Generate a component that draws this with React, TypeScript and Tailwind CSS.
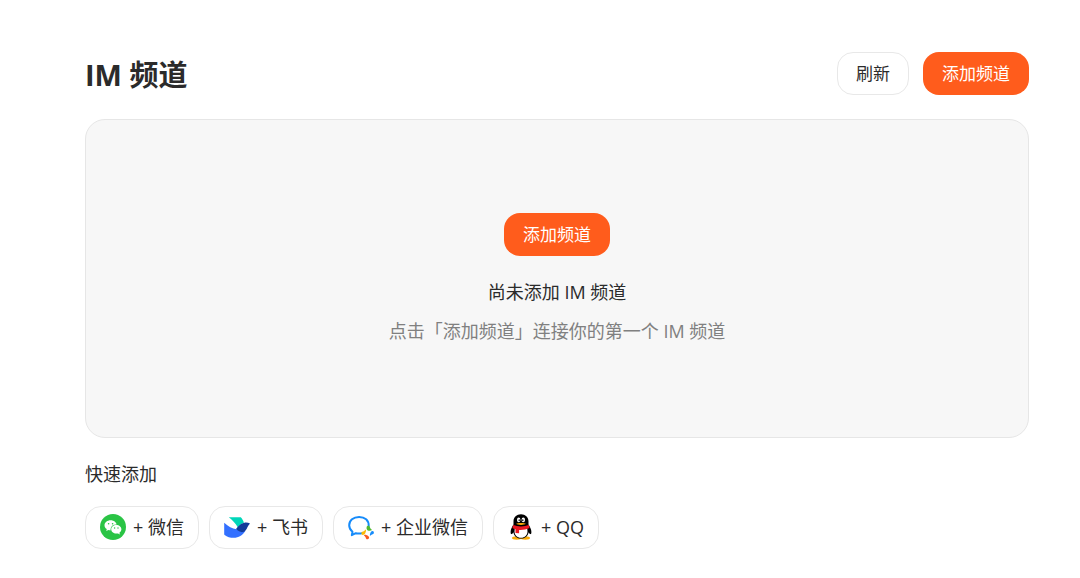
import type { ReactNode } from 'react'

function WeChatIcon() {
  return (
    <svg viewBox="0 0 26 26" className="size-[26px] shrink-0" aria-hidden="true">
      <circle cx="13" cy="13" r="13" fill="#2ac445" />
      <path
        d="M10.600 6.200c-3.400 0-6.100 2.200-6.100 5 0 1.600.9 3 2.300 3.900l-.6 1.900 2.200-1.100c.7.2 1.400.3 2.200.3 3.400 0 6.100-2.200 6.100-5s-2.700-5-6.100-5z"
        fill="#fff"
      />
      <ellipse cx="16.300" cy="15.300" rx="5.700" ry="4.900" fill="#2ac445" />
      <path
        d="M16.300 11c-2.900 0-5.100 1.900-5.100 4.300s2.200 4.300 5.100 4.300c.6 0 1.200-.1 1.700-.2l1.900 1-.5-1.700c1.200-.8 2-2 2-3.400 0-2.400-2.200-4.300-5.100-4.300z"
        fill="#fff"
      />
      <circle cx="8.600" cy="9.700" r=".8" fill="#2ac445" />
      <circle cx="12.600" cy="9.700" r=".8" fill="#2ac445" />
      <circle cx="14.600" cy="14" r=".7" fill="#2ac445" />
      <circle cx="18" cy="14" r=".7" fill="#2ac445" />
    </svg>
  )
}

function FeishuIcon() {
  return (
    <svg viewBox="0 0 26 26" className="size-[26px] shrink-0" aria-hidden="true">
      <path d="M4.800 3.200h12c1.600 1.700 2.600 3.600 3.100 5.600-2.400.8-4.200 2.400-6 4.800C11.500 9.300 8.600 6 4.800 3.200z" fill="#00d6b9" />
      <path d="M.2 8.800c4.200 3.600 7.900 5.900 12.400 6.500 3 1.500 5.600 2 8.900 1.400-2.700 4.500-7 7.100-11.700 7.100-3.600 0-6.700-1-9.200-2.900-.4-.3-.4-.6-.4-1z" fill="#3370ff" />
      <path d="M12 15.100c2.800-3.400 5.500-6.200 9.300-6.500 1.700-.1 3.300.2 4.700.8-2.300 2-2.700 5-4.500 7.200-2.600 2.700-6.200 1.700-9.500-1.500z" fill="#133c9a" />
    </svg>
  )
}

function WeComIcon() {
  return (
    <svg viewBox="0 0 26 26" className="size-[26px] shrink-0" aria-hidden="true">
      <path
        d="M20.700 12C20.900 6.300 16.800 3 11.100 3 5.300 3 1.200 6.500 1.200 11.300c0 2.900 1.300 4.900 3.300 6.400l-.7 3.500 4-2c2 .6 4.400.5 6.600-.1"
        fill="none"
        stroke="#168bfa"
        strokeWidth="2"
        strokeLinecap="round"
        strokeLinejoin="round"
      />
      <path d="M19.400 16.200c-1-.8-1-2.500-.6-3.600a1.600 1.600 0 0 1 2.900-.1c.3 1.500 1.100 2.500 2.400 3.600-1.500.9-3.100 1-4.700.1z" fill="#50b832" />
      <path d="M22 20.200c.3-1.900 1.200-3.100 2.500-3.200a1.600 1.600 0 0 1 .7 2.900c-1.300.3-2.300 1-3 1.900-.4-.5-.4-1-.2-1.600z" fill="#168bfa" />
      <path d="M18.300 20.900c1.800.5 3 1.500 2.800 3.100a1.700 1.700 0 0 1-3.100.4c-.3-1.400-1-2.400-2.200-3.200.8-.5 1.600-.6 2.500-.3z" fill="#fa5a1e" />
      <path d="M17.600 18.200c-.5 1.800-1.500 2.700-3 2.700a1.700 1.700 0 0 1-.4-3.100c1.500-.4 2.500-1.200 3.400-2.300.6.8.5 1.700 0 2.700z" fill="#fbbc05" />
    </svg>
  )
}

function QQIcon() {
  return (
    <svg viewBox="0 0 26 26" className="size-[26px] shrink-0" aria-hidden="true">
      <ellipse cx="8.700" cy="24" rx="4.700" ry="1.700" fill="#faab07" />
      <ellipse cx="17.300" cy="24" rx="4.700" ry="1.700" fill="#faab07" />
      <path
        d="M13 .3C8.700.3 5.500 3.200 5.500 7.400v3.200C4 13 2.600 15.600 2.600 18c0 1.700.5 2.300 1 2.100.6-.2 1.300-1 1.800-1.900.7 4 3.700 6.300 7.600 6.300s6.900-2.300 7.600-6.300c.5.9 1.200 1.700 1.800 1.900.5.2 1-.4 1-2.100 0-2.400-1.400-5-2.900-7.400V7.400C20.500 3.200 17.300.3 13 .3z"
        fill="#000"
      />
      <path d="M7.200 13h11.600c.5 1.500.7 2.900.7 4.400 0 3.700-2.700 6.300-6.500 6.300s-6.500-2.600-6.500-6.300c0-1.500.2-2.900.7-4.400z" fill="#fff" />
      <ellipse cx="10.700" cy="5.900" rx="1.700" ry="2.300" fill="#fff" />
      <ellipse cx="15.300" cy="5.900" rx="1.700" ry="2.300" fill="#fff" />
      <ellipse cx="11.200" cy="6.200" rx=".7" ry="1" fill="#000" />
      <ellipse cx="14.800" cy="6.200" rx=".7" ry="1" fill="#000" />
      <path d="M8.200 9.800c1.200-1.200 8.400-1.200 9.600 0-1.200 1.500-8.400 1.500-9.600 0z" fill="#faab07" />
      <path d="M5.200 11.100c4.800 1.700 10.800 1.700 15.600 0l.8 3c-3.100 1.400-7 2-10.500 1.800v3.300l-3.600-.3v-3.600c-1.100-.3-2.200-.7-3.100-1.200z" fill="#eb1923" />
    </svg>
  )
}

const quickChannels: { name: string; icon: ReactNode }[] = [
  { name: '微信', icon: <WeChatIcon /> },
  { name: '飞书', icon: <FeishuIcon /> },
  { name: '企业微信', icon: <WeComIcon /> },
  { name: 'QQ', icon: <QQIcon /> },
]

function AddChannelButton() {
  return (
    <button
      type="button"
      className="h-[43px] rounded-2xl bg-[#ff5c1c] px-[19px] text-[17px] text-white hover:bg-[#f04f10]"
    >
      添加频道
    </button>
  )
}

export default function App() {
  return (
    <main className="min-h-screen bg-white pt-[52px] pb-7 pl-[85px] pr-[51px] font-['Open_Sans','Noto_Sans_CJK_SC',sans-serif] text-[18px] leading-7 text-[#2b2b2b]">
      <header className="flex items-center justify-between">
        <h1 className="pt-0.5 text-[29px] font-bold">IM 频道</h1>
        <div className="flex items-center gap-[14px]">
          <button
            type="button"
            className="h-[43px] rounded-2xl border border-[#e8e8e8] bg-white px-[18px] text-[17px] hover:bg-gray-50"
          >
            刷新
          </button>
          <AddChannelButton />
        </div>
      </header>

      <section className="mt-6 flex flex-col items-center rounded-[20px] border border-[#e6e6e6] bg-[#f7f7f7] pt-[93px] pb-[92px] text-center">
        <AddChannelButton />
        <p className="mt-[22px]">尚未添加 IM 频道</p>
        <p className="mt-[11px] text-[#808080]">点击「添加频道」连接你的第一个 IM 频道</p>
      </section>

      <section>
        <h2 className="mt-[22px]">快速添加</h2>
        <div className="mt-[18px] flex flex-wrap gap-[10px]">
          {quickChannels.map((channel) => (
            <button
              key={channel.name}
              type="button"
              className="flex h-[43px] items-center gap-[7px] rounded-2xl border border-[#e8e8e8] bg-white px-[14px] pb-0.5 hover:bg-gray-50"
            >
              {channel.icon}
              <span>+ {channel.name}</span>
            </button>
          ))}
        </div>
      </section>
    </main>
  )
}
